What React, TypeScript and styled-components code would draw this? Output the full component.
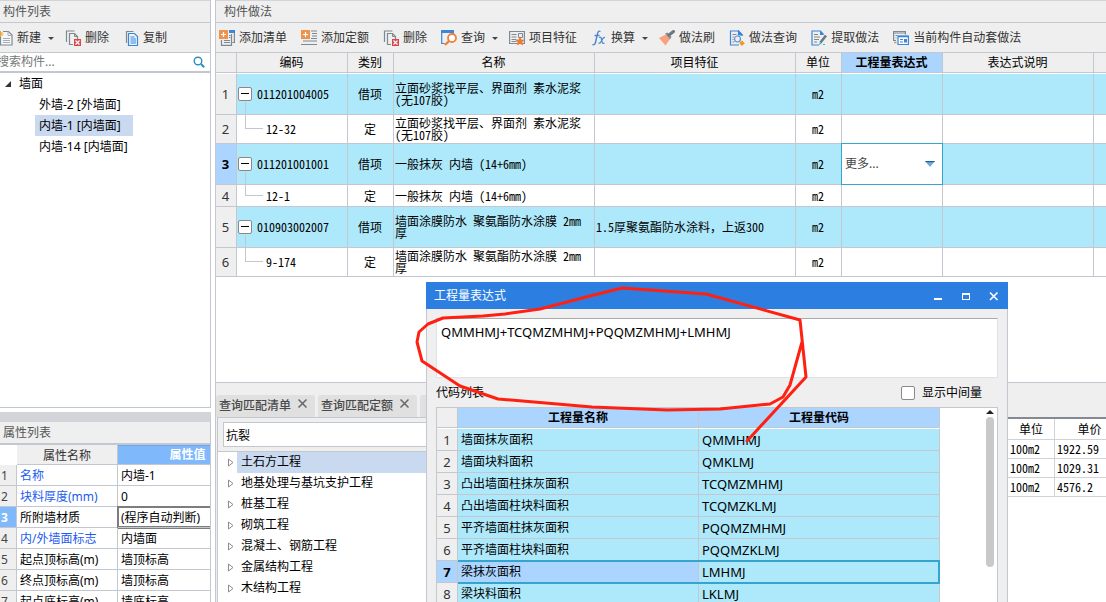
import React from 'react';
import styled, { createGlobalStyle, css } from 'styled-components';

const ui = '"Noto Sans", "Noto Sans CJK SC", sans-serif';
const grid = '"Noto Sans Mono CJK SC", "Noto Sans CJK SC", monospace';

const c = {
  line: '#c3c7cf',
  panel: '#efefef',
  cyan: '#aee9fb',
  pick: '#abd4ff',
  treePick: '#c9d9f0',
  blue: '#2c7fe0',
  focus: '#35a5d0',
  icon: '#7d8a94',
  iconBlue: '#3b86d6',
  orange: '#f0934a',
};

const Global = createGlobalStyle`
  *, *::before, *::after { box-sizing: border-box; }
  body { margin: 0; background: #fff; color: #000; font: 12px/16px ${ui}; overflow: hidden; }
  button, input, select, textarea { font: inherit; color: inherit; margin: 0; }
  ul { list-style: none; margin: 0; padding: 0; }
  svg { display: block; flex: none; }
`;

const Shell = styled.div`
  position: relative;
  display: flex;
  gap: 4px;
  height: 100vh;
  overflow: hidden;
`;

const Sidebar = styled.aside`
  flex: none;
  width: 211px;
  display: flex;
  flex-direction: column;
  gap: 4px;
`;

const ComponentPanel = styled.section`
  flex: 1;
  min-height: 0;
  overflow: hidden;
  border: solid ${c.line};
  border-width: 0 1px 1px 0;
`;

const PropertyPanel = styled.section`
  flex: none;
  height: 190px;
  overflow: hidden;
  border-top: 10px solid #d2d4da;
  border-right: 1px solid ${c.line};
`;

const PanelTitle = styled.h2<{ $thick?: boolean }>`
  margin: 0;
  height: 23px;
  padding: 3px;
  background: ${c.panel};
  border-bottom: ${(p) => (p.$thick ? 2 : 1)}px solid ${c.line};
  border-top: ${(p) => (p.$thick ? '0' : '1px solid #d2d4da')};
  color: #555;
  font-size: 12px;
  line-height: 16px;
  font-weight: 400;
`;

const Toolbar = styled.div<{ $cut?: boolean }>`
  display: flex;
  align-items: center;
  gap: 10px;
  height: 30px;
  padding-left: 3px;
  background: ${c.panel};
  border-bottom: 1px solid ${c.line};
  overflow: hidden;
  ${(p) => p.$cut && css`padding-left: 0; & > :first-child { margin-left: -3px; }`}
`;

const ToolButton = styled.button<{ $menu?: boolean }>`
  flex: none;
  display: flex;
  align-items: center;
  gap: 4px;
  padding: 0 ${(p) => (p.$menu ? 0 : 4)}px 0 0;
  border: 0;
  background: none;
  color: #333;
  line-height: 16px;
  white-space: nowrap;
`;

const SearchRow = styled.label`
  display: flex;
  align-items: center;
  height: 20px;
  padding-right: 5px;
  border-bottom: 2px solid ${c.line};
  overflow: hidden;
`;

const SearchInput = styled.input`
  flex: 1;
  min-width: 0;
  margin-left: -3px;
  padding: 0;
  border: 0;
  outline: 0;
  line-height: 16px;
  &::placeholder { color: #777; opacity: 1; }
`;

const TreeNode = styled.li`
  display: flex;
  align-items: center;
  height: 21px;
  padding-left: 4px;
  gap: 7px;
`;

const TreeLeaf = styled.li<{ $on?: boolean }>`
  width: max-content;
  min-width: 98px;
  height: 21px;
  margin-left: 35px;
  padding: 0 4px;
  line-height: 21px;
  background: ${(p) => (p.$on ? c.treePick : 'transparent')};
`;

const PropTable = styled.table`
  table-layout: fixed;
  width: 265px;
  margin-left: -7px;
  border-collapse: separate;
  border-spacing: 0;
  th, td { padding: 2px 3px 0; height: 21px; line-height: 16px; text-align: left; white-space: nowrap; border: solid ${c.line}; border-width: 0 1px 1px 0; }
  thead th { height: 20px; text-align: center; font-weight: 400; color: #333; background: ${c.panel}; }
  thead th:first-child { background: #fff; border-color: #fff; }
  thead th:last-child { padding-top: 0; background: #80b9fb; color: #fff; font-weight: 700; border-top: 1px solid #6aa6ec; }
`;

const PropNum = styled.th<{ $on?: boolean }>`
  && {
    text-align: center;
    font-weight: ${(p) => (p.$on ? 700 : 400)};
    color: ${(p) => (p.$on ? '#fff' : '#444')};
    background: ${(p) => (p.$on ? '#80b9fb' : c.panel)};
  }
`;

const PropName = styled.td<{ $link?: boolean }>`
  color: ${(p) => (p.$link ? '#1c5cf0' : '#000')};
`;

const PropValue = styled.td<{ $on?: boolean }>`
  ${(p) => p.$on && css`box-shadow: inset 0 0 0 1px #7d7d7d, 0 0 0 1px #7d7d7d;`}
`;

const Main = styled.main`
  flex: 1;
  min-width: 0;
  display: flex;
  flex-direction: column;
  border-left: 1px solid ${c.line};
`;

const MainTitle = styled(PanelTitle)`
  padding-left: 8px;
`;

const Work = styled.section`
  flex: 1;
  min-height: 0;
  overflow: hidden;
`;

const GridTable = styled.table`
  table-layout: fixed;
  width: 100%;
  border-collapse: separate;
  border-spacing: 0;
  th, td { padding: 0 2px 0 1px; border: solid ${c.line}; border-width: 0 1px 1px 0; }
  th:last-child, td:last-child { border-right: 0; }
  tbody tr:first-child > * { border-top: 1px solid #fff; }
`;

const Head = styled.th<{ $on?: boolean }>`
  height: 20px;
  line-height: 16px;
  font-weight: ${(p) => (p.$on ? 700 : 400)};
  background: ${(p) => (p.$on ? c.pick : c.panel)};
  white-space: nowrap;
`;

const RowNum = styled.th<{ $on?: boolean }>`
  font-size: 13px;
  line-height: 16px;
  font-weight: ${(p) => (p.$on ? 700 : 400)};
  color: ${(p) => (p.$on ? '#000' : '#333')};
  background: ${(p) => (p.$on ? c.pick : c.panel)};
`;

const GridRow = styled.tr<{ $h: number; $item?: boolean }>`
  height: ${(p) => p.$h}px;
  td { background: ${(p) => (p.$item ? c.cyan : '#fff')}; font-family: ${grid}; line-height: 12px; }
`;

const CodeCell = styled.td<{ $child?: boolean }>`
  position: relative;
  ${(p) =>
    p.$child &&
    css`
      && { padding-left: 29px; }
      &::before {
        content: '';
        position: absolute;
        left: 8px;
        top: -13px;
        bottom: 50%;
        width: 18px;
        border: solid ${c.line};
        border-width: 0 0 1px 1px;
      }
    `}
`;

const CodeLine = styled.div`
  display: flex;
  align-items: center;
  gap: 5px;
`;

const Fold = styled.button`
  display: grid;
  place-items: center;
  width: 14px;
  height: 14px;
  padding: 0;
  border: 1px solid #888;
  border-radius: 2px;
  background: #fff;
`;

const MidCell = styled.td`
  text-align: center;
`;

const NameCell = styled.td`
  white-space: pre-line;
`;

const EditCell = styled.td`
  position: relative;
`;

const EditBox = styled.div`
  position: absolute;
  inset: -1px;
  display: flex;
  align-items: center;
  background: #fff;
  border: 1px solid ${c.focus};
  padding: 0 7px 0 3px;
  select {
    flex: 1;
    min-width: 0;
    appearance: none;
    border: 0;
    padding: 0;
    background: none;
    outline: 0;
    font-family: ${ui};
    line-height: 16px;
    color: #444;
  }
`;

const Dock = styled.section`
  flex: none;
  height: 220px;
  display: flex;
  flex-direction: column;
  border-top: 1px solid ${c.line};
  background: ${c.panel};
`;

const TabBar = styled.div`
  display: flex;
  gap: 3px;
  padding-top: 12px;
  height: 34px;
`;

const Tab = styled.div`
  display: flex;
  align-items: center;
  gap: 7px;
  min-width: 99px;
  height: 22px;
  padding-left: 3px;
  border-radius: 3px 3px 0 0;
  background: #e0e0e0;
  button { border: 0; padding: 0; background: none; color: #4a4a4a; line-height: 16px; font-weight: 500; }
  button + button { align-self: flex-start; padding-top: 4px; }
`;

const DockBody = styled.div`
  flex: 1;
  min-height: 0;
  display: flex;
`;

const QueryPane = styled.div`
  flex: 1;
  min-width: 0;
  margin-left: 1px;
  display: flex;
  flex-direction: column;
  border: solid ${c.line};
  border-width: 1px 0 0 1px;
`;

const QueryBar = styled.div`
  padding: 4px 5px;
  border-bottom: 1px solid ${c.line};
  input {
    display: block;
    width: 100%;
    height: 25px;
    padding: 0 2px;
    border: 1px solid ${c.line};
    background: #fff;
    outline: 0;
  }
`;

const QueryTree = styled.ul`
  flex: 1;
  min-height: 0;
  overflow: hidden;
  background: #fff;
`;

const QueryNode = styled.li<{ $on?: boolean }>`
  display: flex;
  align-items: center;
  height: 21px;
  padding-left: 10px;
  gap: 3px;
  span { flex: 1; height: 21px; padding-left: 4px; line-height: 19px; background: ${(p) => (p.$on ? c.treePick : 'none')}; }
`;

const PricePane = styled.div`
  flex: none;
  width: 98px;
  overflow: hidden;
  background: #fff;
  border-top: 2px solid #858a92;
`;

const PriceTable = styled.table`
  table-layout: fixed;
  width: 117px;
  border-collapse: separate;
  border-spacing: 0;
  font-family: ${grid};
  th, td { height: 19px; padding: 0 2px; line-height: 16px; text-align: left; border: solid #d0d2d6; border-width: 0 1px 1px 0; }
  thead th { height: 21px; text-align: center; font-weight: 400; }
`;

const Dialog = styled.section`
  position: absolute;
  left: 426px;
  top: 282px;
  bottom: 0;
  width: 582px;
  display: flex;
  flex-direction: column;
  background: ${c.panel};
`;

const DialogBar = styled.header`
  flex: none;
  display: flex;
  align-items: center;
  height: 27px;
  padding-left: 8px;
  background: ${c.blue};
  color: #fff;
  h2 { flex: 1; margin: 0; font-size: 12px; line-height: 16px; font-weight: 400; }
  button { width: 28px; height: 27px; padding: 0; border: 0; background: none; display: grid; place-items: center; }
`;

const DialogBody = styled.div`
  flex: 1;
  min-height: 0;
  display: flex;
  flex-direction: column;
  padding: 9px 9px 0;
  border: solid ${c.line};
  border-width: 0 1px;
`;

const Formula = styled.textarea`
  flex: none;
  display: block;
  width: 100%;
  height: 60px;
  padding: 4px;
  border: 1px solid #dfe1e6;
  border-top-color: #a9abb0;
  background: #fff;
  resize: none;
  outline: 0;
  font-size: 13px;
  line-height: 18px;
`;

const ListBar = styled.div`
  flex: none;
  display: flex;
  justify-content: space-between;
  align-items: center;
  height: 29px;
  padding-right: 16px;
  label { display: flex; align-items: center; gap: 7px; }
  input { appearance: none; width: 14px; height: 14px; border: 1px solid #8a8a8a; border-radius: 2px; background: #fff; }
`;

const CodeFrame = styled.div`
  flex: 1;
  min-height: 0;
  display: flex;
  justify-content: space-between;
  padding-right: 3px;
  overflow: hidden;
  background: #fff;
  border: solid ${c.line};
  border-width: 1px 1px 0;
`;

const CodeTable = styled.table`
  table-layout: fixed;
  width: 503px;
  border-collapse: separate;
  border-spacing: 0;
  th, td { height: 22px; padding: 0 3px; line-height: 16px; border: solid ${c.line}; border-width: 0 1px 1px 0; }
  td { background: ${c.cyan}; }
  thead th { height: 20px; }
  tbody tr:first-child > * { height: 23px; border-top: 1px solid #fff; }
`;

const ItemCell = styled.td<{ $on?: boolean; $first?: boolean; $code?: boolean }>`
  ${(p) => p.$code && css`font-size: 13px;`}
  ${(p) =>
    p.$on &&
    css`
      position: relative;
      && { background: ${p.$first ? c.pick : c.cyan}; }
      &::after {
        content: '';
        position: absolute;
        inset: -1px -1px -2px 0;
        border: solid ${c.focus};
        border-width: 2px ${p.$first ? 0 : 2}px 2px 0;
      }
    `}
`;

const Scroll = styled.div`
  width: 8px;
  padding-top: 2px;
  display: flex;
  flex-direction: column;
  gap: 3px;
  i { height: 150px; border-radius: 4px; background: #c9c9c9; }
`;

const Marker = styled.svg`
  position: absolute;
  left: 410px;
  top: 280px;
  pointer-events: none;
`;

const Ico = ({ children }: { children: React.ReactNode }) => (
  <svg width="16" height="16" viewBox="0 0 16 16" fill="none" stroke={c.icon} strokeWidth="1.2">
    {children}
  </svg>
);

const Caret = () => (
  <svg width="10" height="16" viewBox="0 0 10 16">
    <path d="M3 7h6L6 10z" fill="#444" />
  </svg>
);

const NewIcon = () => (
  <Ico>
    <path d="M6 1.500h5.500l3.500 3.500v10H3.500V6" fill="#f6f7f8" />
    <path d="M11 1.500v4h4M6 8.500h7M6 10.500h7M6 12.500h7" strokeWidth="1" stroke="#a4adb5" />
    <path d="M3.500 1v6M.5 4h6M1.500 2l4 4M5.500 2l-4 4" stroke="#f0a52a" strokeWidth="1" />
  </Ico>
);

const DeleteIcon = () => (
  <Ico>
    <path d="M1.500 12V1h8" />
    <path d="M8 14.500H4.500v-11h5l3 3V9" />
    <path d="M9.500 3.500v3h3" strokeWidth="1" />
    <path d="M9 9h7v7H9z" fill="#d9474b" stroke="none" />
    <path d="M10.500 10.500l4 4M14.500 10.500l-4 4" stroke="#fff" />
  </Ico>
);

const CopyIcon = () => (
  <Ico>
    <path d="M3.500 13V1.500h7" />
    <path d="M5.500 3.500h6l3 3v9h-9z" fill="#eaf3fd" stroke={c.iconBlue} />
    <path d="M7.500 7h4M7.500 9h5.500M7.500 11h5.500M7.500 13h5.500" stroke={c.iconBlue} strokeWidth="1" />
  </Ico>
);

const Plus = () => (
  <>
    <path d="M0 0h9v9H0z" fill={c.orange} stroke="none" />
    <path d="M4.500 2v5M2 4.500h5" stroke="#fff" />
  </>
);

const AddListIcon = () => (
  <Ico>
    <path d="M10 0h6v3h-6z" fill={c.iconBlue} stroke="none" />
    <path d="M15.400 3v9.500h-2M12.500 4v11.400H2.500V10" />
    <path d="M10 5.500h1.500M10 7.500h1.500M5 10.500h6M5 12.500h6" strokeWidth="1" />
    <Plus />
  </Ico>
);

const AddQuotaIcon = () => (
  <Ico>
    <path d="M10 1h6M11 3.500h5M11 6h5M10 8.500h6M2 11h14M0 14.500h16" />
    <Plus />
  </Ico>
);

const QueryIcon = () => (
  <Ico>
    <path d="M0 1.500h13" stroke={c.iconBlue} strokeWidth="3" />
    <path d="M.7 3v10.500h3M12.500 3v1" stroke={c.iconBlue} />
    <circle cx="11" cy="8" r="4" stroke="#f0803a" strokeWidth="1.800" fill="#fff" />
    <path d="M8 11l-4 4" stroke="#f0803a" strokeWidth="2.400" />
  </Ico>
);

const FeatureIcon = () => (
  <Ico>
    <path d="M.6 1.500h14.800v12H.6z" />
    <path d="M2.500 4.500h5M2.500 7h5M2.500 9.500h5M2.500 11.500h5M9.500 3.500h4v4h-4z" strokeWidth="1" />
    <path d="M11 6.500l1.400 3 3.300.4-2.400 2.200.7 3.400-3-1.700-3 1.700.7-3.400L6.300 9.900l3.300-.4z" fill="#ee7a2e" stroke="none" />
  </Ico>
);

const FxIcon = () => (
  <Ico>
    <path d="M9.500 1.500C7.500.3 6.800 2 6.300 4.500L4.600 12C4.100 14.500 3 15.500 1.300 14.500M3.500 5.500h5" stroke="#4a86d0" strokeWidth="1.400" />
    <path d="M8 7.500c2-1 2.300.5 2.800 3s1 3.500 2.700 2.500M14 7.500c-1.500-.5-2.300 1-3.300 3s-1.900 3.200-3.200 2.500" stroke="#4a86d0" />
  </Ico>
);

const BrushIcon = () => (
  <Ico>
    <path d="M0 8l7-3.500 4 4.500-4.500 6.500z" fill="#f9a27c" stroke="none" />
    <path d="M6 3.500l2.500-1 4 4.500-1.500 2.500z" fill="#858f98" stroke="none" />
    <path d="M10 5l4.500-3.500" stroke="#6c7780" strokeWidth="3" strokeLinecap="round" />
  </Ico>
);

const DocQueryIcon = () => (
  <Ico>
    <path d="M13 6V4.500L9.500 1h-8v14H10" stroke={c.iconBlue} />
    <path d="M9.500 1v4H13z" fill={c.iconBlue} stroke={c.iconBlue} />
    <path d="M3.500 4.500h4M3.500 7h1.500M3.500 9.500h1M3.500 12h2" strokeWidth="1" />
    <circle cx="8.500" cy="9" r="3" stroke="#5a8fd8" />
    <path d="M13 10.500l2.800 2.700L13 16l-2.800-2.800z" fill="#f09a20" stroke="none" />
  </Ico>
);

const ExtractIcon = () => (
  <Ico>
    <path d="M12.500 4.500L9.500 1H1v14h7" stroke={c.iconBlue} />
    <path d="M9 1v4h4z" fill={c.iconBlue} stroke="none" />
    <path d="M3 4.500h4M3 7h6M3 9.500h5M3 12h3" strokeWidth="1" />
    <path d="M9.500 12.500l5.500-7" stroke="#6c7780" strokeWidth="2.600" />
    <path d="M8 15l.8-3 2 1.600z" fill="#35b3d2" stroke="none" />
    <path d="M12 14.500h2" stroke="#35b3d2" />
  </Ico>
);

const AutoIcon = () => (
  <Ico>
    <path d="M3 10.500H.6V1.500h11.800v3M.6 3h11.800" />
    <path d="M2.500 5.500h2M2.500 8h1" strokeWidth="1" />
    <path d="M5 6h10.400v8.500H5z" fill="#fff" stroke={c.iconBlue} />
    <path d="M5 6.500h10.400" stroke={c.iconBlue} strokeWidth="1.600" />
    <path d="M7 9.500h3M7 12h3" strokeWidth="1" stroke={c.iconBlue} />
    <path d="M11 9h3v3.500h-3z" fill={c.iconBlue} stroke="none" />
    <path d="M1 12.500h2.500" stroke={c.orange} strokeWidth="1.600" />
  </Ico>
);

type ToolDef = { text: string; icon: React.ReactNode; menu?: boolean };

const Tool = ({ text, icon, menu }: ToolDef) => (
  <ToolButton type="button" $menu={menu}>
    {icon}
    {text}
    {menu && <Caret />}
  </ToolButton>
);

const sideTools: ToolDef[] = [
  { text: '新建', icon: <NewIcon />, menu: true },
  { text: '删除', icon: <DeleteIcon /> },
  { text: '复制', icon: <CopyIcon /> },
];

const mainTools: ToolDef[] = [
  { text: '添加清单', icon: <AddListIcon /> },
  { text: '添加定额', icon: <AddQuotaIcon /> },
  { text: '删除', icon: <DeleteIcon /> },
  { text: '查询', icon: <QueryIcon />, menu: true },
  { text: '项目特征', icon: <FeatureIcon /> },
  { text: '换算', icon: <FxIcon />, menu: true },
  { text: '做法刷', icon: <BrushIcon /> },
  { text: '做法查询', icon: <DocQueryIcon /> },
  { text: '提取做法', icon: <ExtractIcon /> },
  { text: '当前构件自动套做法', icon: <AutoIcon /> },
];

const props: { name: string; value: string; link?: boolean }[] = [
  { name: '名称', value: '内墙-1', link: true },
  { name: '块料厚度(mm)', value: '0', link: true },
  { name: '所附墙材质', value: '(程序自动判断)' },
  { name: '内/外墙面标志', value: '内墙面', link: true },
  { name: '起点顶标高(m)', value: '墙顶标高' },
  { name: '终点顶标高(m)', value: '墙顶标高' },
  { name: '起点底标高(m)', value: '墙底标高' },
];

const rows = [
  { h: 42, code: '011201004005', item: true, name: '立面砂浆找平层、界面剂 素水泥浆\n(无107胶)', feature: '' },
  { h: 29, code: '12-32', item: false, name: '立面砂浆找平层、界面剂 素水泥浆\n(无107胶)', feature: '' },
  { h: 41, code: '011201001001', item: true, name: '一般抹灰 内墙 (14+6mm)', feature: '' },
  { h: 22, code: '12-1', item: false, name: '一般抹灰 内墙 (14+6mm)', feature: '' },
  { h: 41, code: '010903002007', item: true, name: '墙面涂膜防水 聚氨酯防水涂膜 2mm\n厚', feature: '1.5厚聚氨酯防水涂料，上返300' },
  { h: 29, code: '9-174', item: false, name: '墙面涂膜防水 聚氨酯防水涂膜 2mm\n厚', feature: '' },
];

const chapters = ['土石方工程', '地基处理与基坑支护工程', '桩基工程', '砌筑工程', '混凝土、钢筋工程', '金属结构工程', '木结构工程'];

const codes = [
  ['墙面抹灰面积', 'QMMHMJ'],
  ['墙面块料面积', 'QMKLMJ'],
  ['凸出墙面柱抹灰面积', 'TCQMZMHMJ'],
  ['凸出墙面柱块料面积', 'TCQMZKLMJ'],
  ['平齐墙面柱抹灰面积', 'PQQMZMHMJ'],
  ['平齐墙面柱块料面积', 'PQQMZKLMJ'],
  ['梁抹灰面积', 'LMHMJ'],
  ['梁块料面积', 'LKLMJ'],
];

const prices = ['1922.59', '1029.31', '4576.2'];

const CloseMark = ({ color }: { color: string }) => (
  <svg width="9" height="9" viewBox="0 0 9 9" stroke={color} strokeWidth="1.500">
    <path d="M.5.5l8 8M8.500.5l-8 8" />
  </svg>
);

export default function App() {
  return (
    <Shell>
      <Global />
      <Sidebar>
        <ComponentPanel>
          <PanelTitle>构件列表</PanelTitle>
          <Toolbar $cut>
            {sideTools.map((t) => (
              <Tool key={t.text} {...t} />
            ))}
          </Toolbar>
          <SearchRow>
            <SearchInput placeholder="搜索构件..." aria-label="搜索构件" />
            <svg width="12" height="12" viewBox="0 0 12 12" fill="none" stroke="#2a8fc4">
              <circle cx="5" cy="5" r="3.800" strokeWidth="1.400" />
              <path d="M8 8l3.200 3.200" strokeWidth="2" />
            </svg>
          </SearchRow>
          <ul>
            <TreeNode>
              <svg width="8" height="8" viewBox="0 0 8 8">
                <path d="M7 1v6H1z" fill="#333" />
              </svg>
              墙面
            </TreeNode>
            <TreeLeaf>外墙-2 [外墙面]</TreeLeaf>
            <TreeLeaf $on>内墙-1 [内墙面]</TreeLeaf>
            <TreeLeaf>内墙-14 [内墙面]</TreeLeaf>
          </ul>
        </ComponentPanel>
        <PropertyPanel>
          <PanelTitle $thick>属性列表</PanelTitle>
          <PropTable>
            <colgroup>
              <col style={{ width: 24 }} />
              <col style={{ width: 101 }} />
              <col style={{ width: 140 }} />
            </colgroup>
            <thead>
              <tr>
                <th />
                <th>属性名称</th>
                <th>属性值</th>
              </tr>
            </thead>
            <tbody>
              {props.map((p, i) => (
                <tr key={p.name}>
                  <PropNum $on={i === 2}>{i + 1}</PropNum>
                  <PropName $link={p.link}>{p.name}</PropName>
                  <PropValue $on={i === 2}>{p.value}</PropValue>
                </tr>
              ))}
            </tbody>
          </PropTable>
        </PropertyPanel>
      </Sidebar>

      <Main>
        <MainTitle>构件做法</MainTitle>
        <Toolbar>
          {mainTools.map((t) => (
            <Tool key={t.text} {...t} />
          ))}
        </Toolbar>
        <Work>
          <GridTable>
            <colgroup>
              {[21, 111, 46, 201, 201, 46, 101, 151].map((w, i) => (
                <col key={i} style={{ width: w }} />
              ))}
              <col />
            </colgroup>
            <thead>
              <tr>
                <Head />
                <Head>编码</Head>
                <Head>类别</Head>
                <Head>名称</Head>
                <Head>项目特征</Head>
                <Head>单位</Head>
                <Head $on>工程量表达式</Head>
                <Head>表达式说明</Head>
                <Head />
              </tr>
            </thead>
            <tbody>
              {rows.map((r, i) => (
                <GridRow key={i} $h={r.h} $item={r.item}>
                  <RowNum $on={i === 2}>{i + 1}</RowNum>
                  <CodeCell $child={!r.item}>
                    {r.item ? (
                      <CodeLine>
                        <Fold type="button" aria-label="折叠">
                          <svg width="8" height="2" viewBox="0 0 8 2">
                            <path d="M0 0h8v1H0z" fill="#000" />
                          </svg>
                        </Fold>
                        {r.code}
                      </CodeLine>
                    ) : (
                      r.code
                    )}
                  </CodeCell>
                  <MidCell>{r.item ? '借项' : '定'}</MidCell>
                  <NameCell>{r.name}</NameCell>
                  <td>{r.feature}</td>
                  <MidCell>m2</MidCell>
                  {i === 2 ? (
                    <EditCell>
                      <EditBox>
                        <select aria-label="工程量表达式">
                          <option>更多...</option>
                        </select>
                        <svg width="10" height="6" viewBox="0 0 10 6">
                          <path d="M0 0h10L5 6z" fill="#6aaee0" />
                          <path d="M0 0h10L9 1.300H1z" fill="#2a5f8e" />
                        </svg>
                      </EditBox>
                    </EditCell>
                  ) : (
                    <td />
                  )}
                  <td />
                  <td />
                </GridRow>
              ))}
            </tbody>
          </GridTable>
        </Work>
        <Dock>
          <TabBar>
            {['查询匹配清单', '查询匹配定额'].map((t) => (
              <Tab key={t}>
                <button type="button">{t}</button>
                <button type="button" aria-label="关闭">
                  <CloseMark color="#666" />
                </button>
              </Tab>
            ))}
            <Tab />
          </TabBar>
          <DockBody>
            <QueryPane>
              <QueryBar>
                <input defaultValue="抗裂" aria-label="查询" />
              </QueryBar>
              <QueryTree>
                {chapters.map((t, i) => (
                  <QueryNode key={t} $on={i === 0}>
                    <svg width="6" height="9" viewBox="0 0 6 9" fill="none" stroke="#8c8c8c">
                      <path d="M.5 1v7L5 4.500z" />
                    </svg>
                    <span>{t}</span>
                  </QueryNode>
                ))}
              </QueryTree>
            </QueryPane>
            <PricePane>
              <PriceTable>
                <colgroup>
                  <col style={{ width: 47 }} />
                  <col style={{ width: 70 }} />
                </colgroup>
                <thead>
                  <tr>
                    <th>单位</th>
                    <th>单价</th>
                  </tr>
                </thead>
                <tbody>
                  {prices.map((p) => (
                    <tr key={p}>
                      <td>100m2</td>
                      <td>{p}</td>
                    </tr>
                  ))}
                </tbody>
              </PriceTable>
            </PricePane>
          </DockBody>
        </Dock>
      </Main>

      <Dialog role="dialog" aria-label="工程量表达式">
        <DialogBar>
          <h2>工程量表达式</h2>
          <button type="button" aria-label="最小化">
            <svg width="10" height="10" viewBox="0 0 10 10">
              <path d="M1 7h8v2H1z" fill="#fff" />
            </svg>
          </button>
          <button type="button" aria-label="最大化">
            <svg width="10" height="10" viewBox="0 0 10 10">
              <path d="M1 2h8v7H1zM2 4v4h6V4z" fill="#fff" fillRule="evenodd" />
            </svg>
          </button>
          <button type="button" aria-label="关闭">
            <svg width="10" height="10" viewBox="0 0 10 10" stroke="#fff" strokeWidth="1.600">
              <path d="M1 1.500l7.500 7.500M8.500 1.500L1 9" />
            </svg>
          </button>
        </DialogBar>
        <DialogBody>
          <Formula defaultValue="QMMHMJ+TCQMZMHMJ+PQQMZMHMJ+LMHMJ" aria-label="表达式" spellCheck={false} />
          <ListBar>
            <span>代码列表</span>
            <label>
              <input type="checkbox" />
              显示中间量
            </label>
          </ListBar>
          <CodeFrame>
            <div>
              <CodeTable>
                <colgroup>
                  <col style={{ width: 21 }} />
                  <col style={{ width: 241 }} />
                  <col style={{ width: 241 }} />
                </colgroup>
                <thead>
                  <tr>
                    <Head />
                    <Head $on>工程量名称</Head>
                    <Head $on>工程量代码</Head>
                  </tr>
                </thead>
                <tbody>
                  {codes.map(([name, code], i) => (
                    <tr key={code}>
                      <RowNum $on={i === 6}>{i + 1}</RowNum>
                      <ItemCell $on={i === 6} $first>
                        {name}
                      </ItemCell>
                      <ItemCell $on={i === 6} $code>
                        {code}
                      </ItemCell>
                    </tr>
                  ))}
                </tbody>
              </CodeTable>
            </div>
            <Scroll>
              <svg width="8" height="4" viewBox="0 0 8 4">
                <path d="M0 4l4-4 4 4z" fill="#222" />
              </svg>
              <i />
            </Scroll>
          </CodeFrame>
        </DialogBody>
      </Dialog>

      <Marker width="410" height="170" viewBox="410 280 410 170" fill="none" stroke="#ff2012" strokeWidth="3" strokeLinejoin="round" strokeLinecap="round">
        <path d="M747 441L806 377L800 320L706 294L622 288L590 296L540 309L505 314L483 316L443 318L428 324L419 332L417 342L422 361L460 386L498 399L592 407L667 410L720 409L770 404L783 397L790 385L802 342" />
      </Marker>
    </Shell>
  );
}
